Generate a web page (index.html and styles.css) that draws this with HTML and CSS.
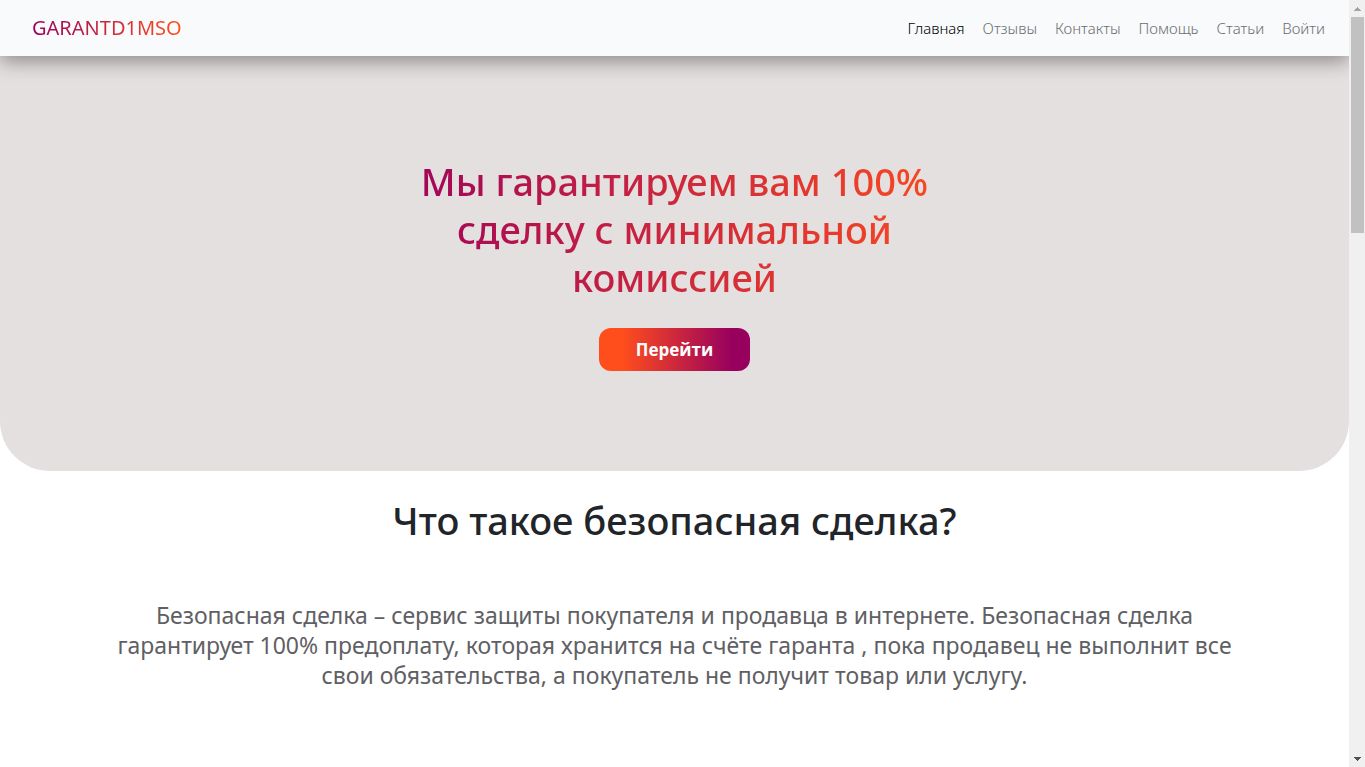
FILE: index.html
```
<!DOCTYPE html>
<html lang="ru">
<head>
<meta charset="utf-8">
<meta name="viewport" content="width=device-width, initial-scale=1">
<title>GARANTD1MSO</title>
<link rel="stylesheet" href="styles.css">
</head>
<body>
<div class="page">
  <header class="navbar">
    <a class="brand" href="#">GARANTD1MSO</a>
    <nav class="nav">
      <a class="nav-link active" href="#">Главная</a>
      <a class="nav-link" href="#">Отзывы</a>
      <a class="nav-link" href="#">Контакты</a>
      <a class="nav-link" href="#">Помощь</a>
      <a class="nav-link" href="#">Статьи</a>
      <a class="nav-link" href="#">Войти</a>
    </nav>
  </header>
  <main>
    <section class="hero">
      <h1 class="hero-title">Мы гарантируем вам 100% сделку с минимальной комиссией</h1>
      <button class="hero-button" type="button">Перейти</button>
    </section>
    <section class="about">
      <h2 class="about-title">Что такое безопасная сделка?</h2>
      <p class="about-text">Безопасная сделка – сервис защиты покупателя и продавца в интернете. Безопасная сделка гарантирует 100% предоплату, которая хранится на счёте гаранта , пока продавец не выполнит все свои обязательства, а покупатель не получит товар или услугу.</p>
    </section>
  </main>
</div>
<div class="scrollbar" aria-hidden="true">
  <svg class="scroll-arrow muted" viewBox="0 0 16 17"><path d="M5 11h7v-1h-1v-1h-1v-1h-1v-1h-1v1h-1v1h-1v1h-1z"/></svg>
  <div class="scroll-track"><div class="scroll-thumb"></div></div>
  <svg class="scroll-arrow" viewBox="0 0 16 17"><path d="M5 7h7v1h-1v1h-1v1h-1v1h-1v-1h-1v-1h-1v-1h-1z"/></svg>
</div>
</body>
</html>
```
FILE: styles.css
```
* { box-sizing: border-box; }
body {
  margin: 0;
  display: flex;
  min-height: 100vh;
  background: #fff;
  color: #212529;
  font-family: "Segoe UI", "Noto Sans", sans-serif;
  font-size: 16px;
  line-height: 24px;
}
.page { flex: 1; min-width: 0; }
.navbar {
  position: relative;
  z-index: 1;
  display: flex;
  align-items: center;
  justify-content: space-between;
  min-height: 56px;
  padding: 8px 16px 8px 32px;
  background: #f8fafc;
  box-shadow: 0 5px 20px rgba(0, 0, 0, 0.4);
}
.brand {
  font-size: 20px;
  line-height: 30px;
  font-weight: 400;
  text-decoration: none;
  color: transparent;
  background: linear-gradient(to right, #9b005d, #ff4e1c);
  -webkit-background-clip: text;
  background-clip: text;
}
.nav { display: flex; flex-wrap: wrap; gap: 2px; }
.nav-link {
  padding: 8px;
  color: #6c6d6e;
  font-size: 15px;
  font-weight: 300;
  text-decoration: none;
}
.nav-link.active { color: #000; }
.hero {
  display: flex;
  flex-direction: column;
  align-items: center;
  padding: 101px 24px 100px;
  background: #e4e0df;
  border-radius: 0 0 50px 50px;
}
.hero-title {
  width: 100%;
  max-width: 608px;
  margin: 0 0 27px;
  font-size: 38px;
  line-height: 48px;
  font-weight: 500;
  text-align: center;
  color: transparent;
  background: linear-gradient(to right, #9b005d, #ff4e1c);
  -webkit-background-clip: text;
  background-clip: text;
}
.hero-button {
  padding: 8px 37px;
  border: 0;
  border-radius: 12px;
  background: linear-gradient(to right, #ff4e1c 15%, #98005e 88%);
  color: #fff;
  font-family: "Segoe UI", "Open Sans", sans-serif;
  font-size: 17px;
  line-height: 27px;
  font-weight: 700;
}
.about { padding: 25px 100px 76px; text-align: center; }
.about-title {
  margin: 0;
  font-size: 38px;
  line-height: 48px;
  font-weight: 500;
}
.about-text {
  margin: 56px 0 0;
  color: #606064;
  font-size: 23px;
  line-height: 30px;
}
.scrollbar {
  position: sticky;
  top: 0;
  z-index: 2;
  display: flex;
  flex-direction: column;
  width: 16px;
  height: 100vh;
  background: #f0f0f0;
}
.scroll-arrow { width: 16px; height: 17px; fill: #505050; }
.scroll-arrow.muted { fill: #a3a3a3; }
.scroll-track { flex: 1; padding: 0 1px 0 2px; }
.scroll-thumb { height: 216px; background: #c1c1c1; }
```
